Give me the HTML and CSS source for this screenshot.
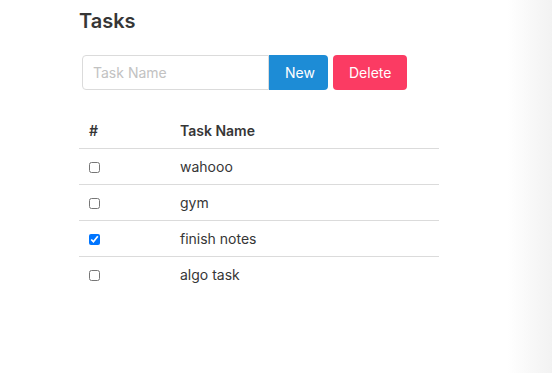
FILE: index.html
```html
<!DOCTYPE html>
<html lang="en">
<head>
    <meta charset="UTF-8">
    <title>Tasks</title>
    <link rel="stylesheet" href="styles.css">
</head>
<body>

<section class="tasks">
    <h1 class="title">Tasks</h1>

    <div class="field">
        <input type="text" class="input" id="taskName" placeholder="Task Name">
        <button class="button is-info" id="addTask">New</button>
        <button class="button is-danger" id="deleteTasks">Delete</button>
    </div>

    <table class="table">
        <thead>
            <tr>
                <th class="col-check">#</th>
                <th>Task Name</th>
            </tr>
        </thead>
        <tbody>
            <tr>
                <td class="col-check"><input type="checkbox"></td>
                <td>wahooo</td>
            </tr>
            <tr>
                <td class="col-check"><input type="checkbox"></td>
                <td>gym</td>
            </tr>
            <tr>
                <td class="col-check"><input type="checkbox" checked></td>
                <td>finish notes</td>
            </tr>
            <tr>
                <td class="col-check"><input type="checkbox"></td>
                <td>algo task</td>
            </tr>
        </tbody>
    </table>
</section>

</body>
</html>
```

FILE: styles.css
```css
html {
    min-height: 100%;
    background: linear-gradient(to right, #fff calc(100% - 45px), #f2f2f2);
}

body {
    margin: 0;
    font-family: Inter, "Open Sans", sans-serif;
    font-size: 14px;
    color: #363636;
}

.tasks {
    width: 360px;
    padding: 9px 0 0 79px;
}

.title {
    margin: 0;
    font-size: 20px;
    font-weight: 600;
    line-height: 1.25;
    color: #363636;
}

.field {
    display: flex;
    margin: 21px 0 0 3px;
}

.input {
    box-sizing: border-box;
    width: 187px;
    height: 35px;
    padding: 0 10px;
    border: 1px solid #dbdbdb;
    border-radius: 4px 0 0 4px;
    font-family: inherit;
    font-size: 14px;
    color: #363636;
}

.input::placeholder {
    color: #c2c2c2;
}

.button {
    height: 35px;
    padding: 0 16px;
    border: 0;
    border-radius: 4px;
    font-family: inherit;
    font-size: 14px;
    color: #fff;
    cursor: pointer;
}

.button.is-info {
    width: 59px;
    border-radius: 0 4px 4px 0;
    background-color: #1d8cd6;
}

.button.is-danger {
    width: 74px;
    margin-left: 5px;
    background-color: #fb3b63;
}

.table {
    width: 360px;
    margin-top: 23px;
    border-collapse: collapse;
}

.table th, .table td {
    padding: 7px 10px;
    line-height: 21px;
    text-align: left;
    border-bottom: 1px solid #dbdbdb;
}

.table th {
    font-weight: 600;
}

.table tbody tr:last-child td {
    border-bottom: 0;
}

.table .col-check {
    width: 71px;
}

.table input[type="checkbox"] {
    width: 11px;
    height: 11px;
    margin: 0;
    vertical-align: -1px;
}
```
